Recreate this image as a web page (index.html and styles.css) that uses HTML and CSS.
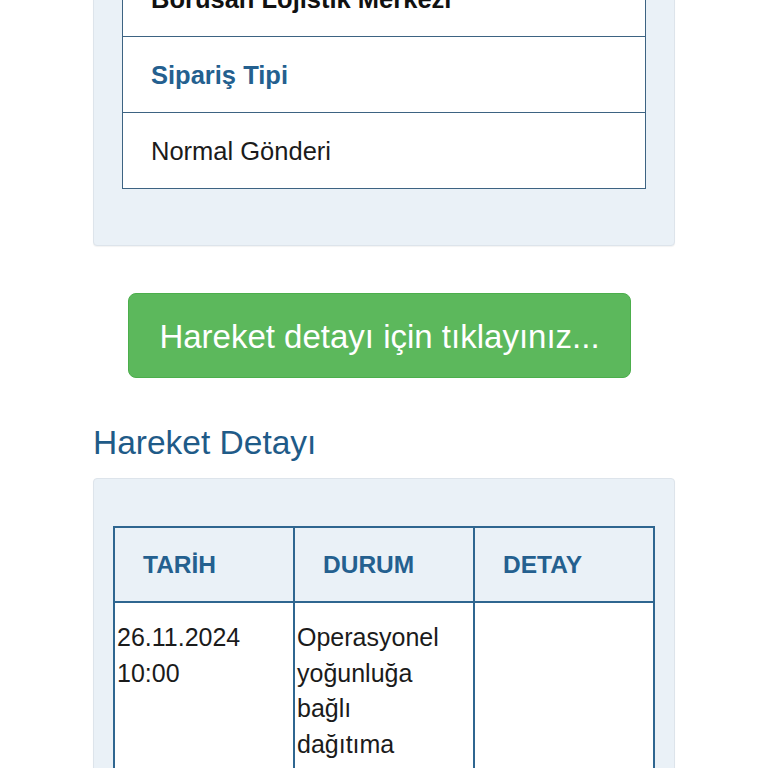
FILE: index.html
```html
<!DOCTYPE html>
<html lang="tr">
<head>
<meta charset="utf-8">
<title>Sipariş Takip</title>
<link rel="stylesheet" href="styles.css">
</head>
<body>
<div class="page">
  <section class="panel info-panel">
    <div class="info-table">
      <div class="info-row value strong">Borusan Lojistik Merkezi</div>
      <div class="info-row label">Sipariş Tipi</div>
      <div class="info-row value">Normal Gönderi</div>
    </div>
  </section>

  <button class="btn-detail" type="button">Hareket detayı için tıklayınız...</button>

  <h2 class="section-title">Hareket Detayı</h2>

  <section class="panel move-panel">
    <table class="move-table">
      <thead>
        <tr>
          <th>TARİH</th>
          <th>DURUM</th>
          <th>DETAY</th>
        </tr>
      </thead>
      <tbody>
        <tr>
          <td>26.11.2024<br>10:00</td>
          <td>Operasyonel yoğunluğa bağlı dağıtıma çıkamamıştır.</td>
          <td></td>
        </tr>
      </tbody>
    </table>
  </section>
</div>
</body>
</html>
```

FILE: styles.css
```css
html, body {
  margin: 0;
  padding: 0;
  background: #ffffff;
}

body {
  font-family: "Liberation Sans", Arial, Helvetica, sans-serif;
  color: #1b1b1b;
}

.page {
  width: 582px;
  margin: -69px 0 0 93px;
}

.panel {
  background: #eaf1f7;
  border: 1px solid #dde4eb;
  border-radius: 4px;
  box-shadow: 0 1px 1px rgba(0, 0, 0, 0.05);
}

.info-panel {
  padding: 28px;
}

.info-table {
  background: #ffffff;
  border: 1px solid #3d6382;
  margin-bottom: 28px;
}

.info-row {
  height: 75px;
  display: flex;
  align-items: center;
  padding: 0 28px;
  font-size: 25.5px;
  line-height: 28px;
  border-bottom: 1px solid #3d6382;
}

.info-row:last-child {
  border-bottom: none;
}

.info-row.strong {
  font-weight: bold;
  color: #111111;
}

.info-row.label {
  font-weight: bold;
  color: #24608f;
}

.btn-detail {
  display: block;
  width: 503px;
  height: 85px;
  margin: 47px 0 0 35px;
  padding: 2px 0 0 0;
  background: #5cb85c;
  border: 1px solid #4cae4c;
  border-radius: 8px;
  color: #ffffff;
  font-family: "Liberation Sans", Arial, Helvetica, sans-serif;
  font-size: 33px;
  text-align: center;
}

.section-title {
  margin: 46px 0 17px 0;
  font-size: 33.5px;
  line-height: 37px;
  font-weight: normal;
  color: #1f5b88;
}

.move-panel {
  padding: 19px 19px 0 19px;
  height: 400px;
}

.move-table {
  width: 100%;
  margin-top: 28px;
  border-collapse: collapse;
  table-layout: fixed;
  border: 2px solid #2f6690;
}

.move-table th,
.move-table td {
  border: 2px solid #2f6690;
}

.move-table th {
  height: 73px;
  padding: 0 28px;
  text-align: left;
  font-size: 24.5px;
  font-weight: bold;
  color: #24608f;
  background: #eaf1f7;
}

.move-table td {
  vertical-align: top;
  padding: 17px 24px 17px 2px;
  font-size: 25px;
  line-height: 35.5px;
  background: #ffffff;
  color: #1b1b1b;
}
```
